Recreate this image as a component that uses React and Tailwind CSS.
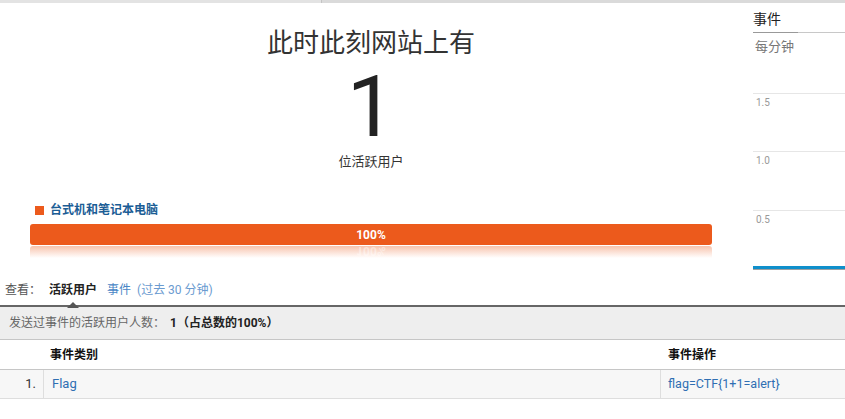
export default function App() {
  return (
    <div className="w-[845px] h-[419px] bg-white overflow-hidden font-[family-name:Roboto,'Noto_Sans_CJK_SC',sans-serif] text-[#333]">
      {/* top strip */}
      <div className="flex h-[3px]">
        <div className="w-[321px] bg-[#e3e3e3]" />
        <div className="w-px bg-[#c4c4c4]" />
        <div className="flex-1 bg-[#dadada]" />
      </div>

      <div className="flex h-[270px]">
        {/* left panel */}
        <div className="w-[742px] flex flex-col">
          <div className="mt-[25px] h-[30px] text-center text-[26px] leading-[30px] text-[#333]">此时此刻网站上有</div>
          <div className="mt-[9px] h-[80px] text-center text-[86px] leading-[80px] text-[#222] font-normal">1</div>
          <div className="mt-[6px] text-center text-[13px] leading-[18px] text-[#333]">位活跃用户</div>
          <div className="mt-[31px] pl-[35px] flex items-center gap-[6px] h-[16px]">
            <span className="w-[9px] h-[9px] bg-[#ec5a1c]" />
            <span className="text-[12px] font-bold text-[#1b5d95] leading-[16px]">台式机和笔记本电脑</span>
          </div>
          <div className="ml-[30px] mr-[30px] mt-[6px]">
            <div className="h-[21px] rounded-[3px] bg-[#ec5a1c] flex items-center justify-center text-white text-[12px] font-bold">100%</div>
            <div className="h-[12px] mt-px rounded-t-[3px] bg-gradient-to-b from-[#f6c3ad] to-white overflow-hidden flex justify-center">
              <span className="text-white text-[12px] font-bold leading-[14px] -scale-y-100 opacity-40 -mt-[4px]">100%</span>
            </div>
          </div>
        </div>

        {/* right panel */}
        <div className="ml-[11px] flex-1 flex flex-col">
          <div className="pt-[7px] h-[29px] text-[14px] leading-[19px] text-[#222] font-normal">事件</div>
          <div className="flex h-px">
            <div className="w-[45px] bg-[#999]" />
            <div className="flex-1 bg-[#c8c8c8]" />
          </div>
          <div className="pl-[2px] pt-[5px] h-[60px] text-[13px] leading-[17px] text-[#777]">每分钟</div>
          <div className="h-px bg-[#e6e6e6]" />
          <div className="pl-[3px] pt-[3px] h-[57px] text-[10px] leading-[12px] text-[#999]">1.5</div>
          <div className="h-px bg-[#e6e6e6]" />
          <div className="pl-[3px] pt-[3px] h-[58px] text-[10px] leading-[12px] text-[#999]">1.0</div>
          <div className="h-px bg-[#e6e6e6]" />
          <div className="pl-[3px] pt-[3px] h-[55px] text-[10px] leading-[12px] text-[#999]">0.5</div>
          <div className="h-[3px] bg-[#0f8fcb]" />
          <div className="h-px bg-[#a0a0a0]" />
        </div>
      </div>

      {/* view tabs */}
      <div className="relative h-[32px] flex items-center pl-[5px] text-[12px] leading-[16px] pt-[1px]">
        <span className="text-[#555] w-[44px]">查看：</span>
        <span className="relative font-bold text-[#222]">
          活跃用户
          <span className="absolute left-1/2 -translate-x-1/2 top-[20px] w-0 h-0 border-l-[6px] border-r-[6px] border-b-[6px] border-l-transparent border-r-transparent border-b-[#555]" />
        </span>
        <span className="ml-[10px] text-[#4a86c5]">事件</span>
        <span className="ml-[6px] text-[#6b9bd0]">(过去 30 分钟)</span>
      </div>

      {/* table */}
      <div className="h-[2px] bg-[#666]" />
      <div className="h-[33px] bg-[#eeeeee] flex items-center pl-[9px] text-[12px] border-b border-[#c6c6c6]">
        <span className="text-[#666]">发送过事件的活跃用户人数：</span>
        <span className="ml-[5px] font-bold text-[#222]">1（占总数的100%）</span>
      </div>
      <div className="h-[30px] flex items-center text-[12px] font-bold text-[#111] border-b border-[#c6c6c6]">
        <div className="w-[44px]" />
        <div className="w-[617px] pl-[6px]">事件类别</div>
        <div className="flex-1 pl-[7px]">事件操作</div>
      </div>
      <div className="h-[29px] flex bg-[#f7f7f7] text-[13px] border-b border-[#dedede]">
        <div className="w-[44px] border-r border-[#dedede] flex items-center justify-end pr-[7px] text-[#333]">1.</div>
        <div className="w-[617px] border-r border-[#dedede] flex items-center pl-[8px] text-[#2f6fb3]">Flag</div>
        <div className="flex-1 flex items-center pl-[7px] text-[#2f6fb3] text-[12.5px]">flag=CTF{"{"}1+1=alert{"}"}</div>
      </div>
    </div>
  );
}
